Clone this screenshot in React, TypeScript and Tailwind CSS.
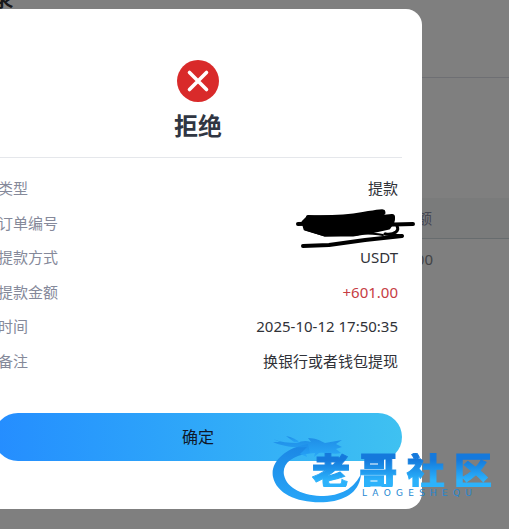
import { useState } from "react";

const rows = [
  { label: "类型", value: "提款" },
  { label: "订单编号", value: null },
  { label: "提款方式", value: "USDT" },
  { label: "提款金额", value: "+601.00", accent: true },
  { label: "时间", value: "2025-10-12 17:50:35" },
  { label: "备注", value: "换银行或者钱包提现" },
];

const RejectIcon = () => (
  <svg width="42" height="42" viewBox="0 0 42 42" aria-hidden="true">
    <circle cx="21" cy="21" r="21" fill="#d92a2a" />
    <path
      d="M12.5 12.5 29.5 29.5M29.5 12.5 12.5 29.5"
      stroke="#fff"
      strokeWidth="3.6"
      strokeLinecap="round"
    />
  </svg>
);

const Scribble = () => (
  <svg
    className="absolute -top-1 -right-[19px]"
    width="122"
    height="42"
    viewBox="0 0 122 42"
    fill="none"
    stroke="#000"
    strokeLinecap="round"
    strokeLinejoin="round"
    aria-hidden="true"
  >
    <path
      d="M13 9 L50 9 L74 7 L89 5 L84 9 L98 9 L98 14 L94 20 L76 24 L58 27 L30 27 L20 24 L10 21 L8 14 Z"
      fill="#000"
      strokeWidth="3"
    />
    <path d="M3 16 L40 15 L80 17 L118 16" strokeWidth="4" />
    <path d="M13 9 Q45 10 68 6 T88 4" strokeWidth="4" />
    <path d="M20 12 Q60 13 97 9 L97 11" strokeWidth="6" />
    <path d="M11 21 L30 27 L62 26 L92 19" strokeWidth="3" />
    <path d="M40 26 Q74 24 88 27" strokeWidth="2" />
    <path d="M102 18 Q104 21 101 24 Q97 27 90 26 L107 28" strokeWidth="3" />
    <path d="M107 28 L70 32 L34 37 L8 38" strokeWidth="4" />
  </svg>
);

const Watermark = () => (
  <div
    className="pointer-events-none absolute top-[434px] left-[272px] h-[70px] w-[224px]"
    aria-hidden="true"
  >
    <svg className="absolute inset-0" width="100" height="70" viewBox="0 0 100 70">
      <defs>
        <linearGradient id="dragon" x1="0" y1="0" x2="0" y2="1">
          <stop offset="0" stopColor="#1b86e4" />
          <stop offset="1" stopColor="#27a6f8" />
        </linearGradient>
      </defs>
      <g fill="url(#dragon)">
        <path d="M36 10C12 14 -2 29 1 43C5 61 28 70 55 68C76 66 88 56 89 40C83 52 73 61 52 62C32 62 15 55 12 41C10 30 19 22 38 19Z" />
        <path
          d="M1 5C8 8 17 9 25 9C29 7 34 6 39 8L36 4C44 4 49 7 53 9L70 6L64 10L70 13L64 15L69 19C62 21 54 18 47 19L42 23L43 19L34 20L35 23L28 20C31 17 33 15 35 13C21 14 9 12 1 8L8 8Z"
          opacity="0.85"
        />
        <path d="M14 2C20 3 24 5 28 9L22 8Z" opacity="0.85" />
      </g>
    </svg>
    <div className="absolute top-[19px] left-10 w-[180px]">
      <div className="flex justify-between bg-linear-to-b from-[#1579dc] from-20% to-[#2cb2fb] to-80% bg-clip-text text-[38px] leading-[34px] font-black text-transparent [-webkit-text-stroke:1px_transparent]">
        <span>老</span>
        <span>哥</span>
        <span>社</span>
        <span>区</span>
      </div>
      <div className="mr-5 ml-[50px] flex justify-between font-['DejaVu_Sans',sans-serif] text-[9px] leading-3 text-[#2387d2]">
        {"LAOGESHEQU".split("").map((letter, i) => (
          <span key={i}>{letter}</span>
        ))}
      </div>
    </div>
  </div>
);

const HistoryPage = () => (
  <main>
    <header className="flow-root h-[78px] border-b border-[#dcdfe6]">
      <h1 className="-mt-[15px] -ml-[10px] text-2xl leading-6 font-medium text-[#303133]">录</h1>
    </header>
    <table className="mt-[120px] w-full text-[15px] leading-5">
      <thead>
        <tr className="h-10 border-b border-[#cfd8dc] bg-[#f5f6f6]">
          <th className="pr-[77px] text-right font-normal text-[#8a8ea6]">金额</th>
        </tr>
      </thead>
      <tbody>
        <tr className="h-[42px]">
          <td className="pr-[76px] text-right text-[#85878c]">601.00</td>
        </tr>
      </tbody>
    </table>
  </main>
);

const App = () => {
  const [open, setOpen] = useState(true);

  return (
    <div className="relative min-h-screen overflow-hidden bg-white font-['Noto_Sans','Noto_Sans_CJK_SC',sans-serif]">
      <HistoryPage />

      {open && (
        <div className="absolute inset-0 bg-black/50 pt-[9px]">
          <section
            role="dialog"
            aria-modal="true"
            aria-labelledby="dialog-title"
            className="-ml-[26px] w-full max-w-md rounded-2xl bg-white px-5 pt-[51px] pb-12"
          >
            <div className="flex flex-col items-center gap-2 border-b border-gray-200 pb-[15px]">
              <RejectIcon />
              <h2 id="dialog-title" className="text-2xl leading-8 font-bold text-[#303642]">
                拒绝
              </h2>
            </div>

            <dl className="flex flex-col gap-3 px-1 pt-[19px] text-[15px] leading-normal">
              {rows.map((row) => (
                <div key={row.label} className="relative flex justify-between">
                  <dt className="text-[#85899a]">{row.label}</dt>
                  <dd className={row.accent ? "text-[#c63c43]" : "text-[#303238]"}>
                    {row.value ?? <Scribble />}
                  </dd>
                </div>
              ))}
            </dl>

            <button
              type="button"
              onClick={() => setOpen(false)}
              className="mt-[41px] h-12 w-full rounded-full bg-linear-to-r from-[#258dff] to-[#3fc1f1] text-base text-[#101828]"
            >
              确定
            </button>
          </section>
        </div>
      )}

      <Watermark />
    </div>
  );
};

export default App;
